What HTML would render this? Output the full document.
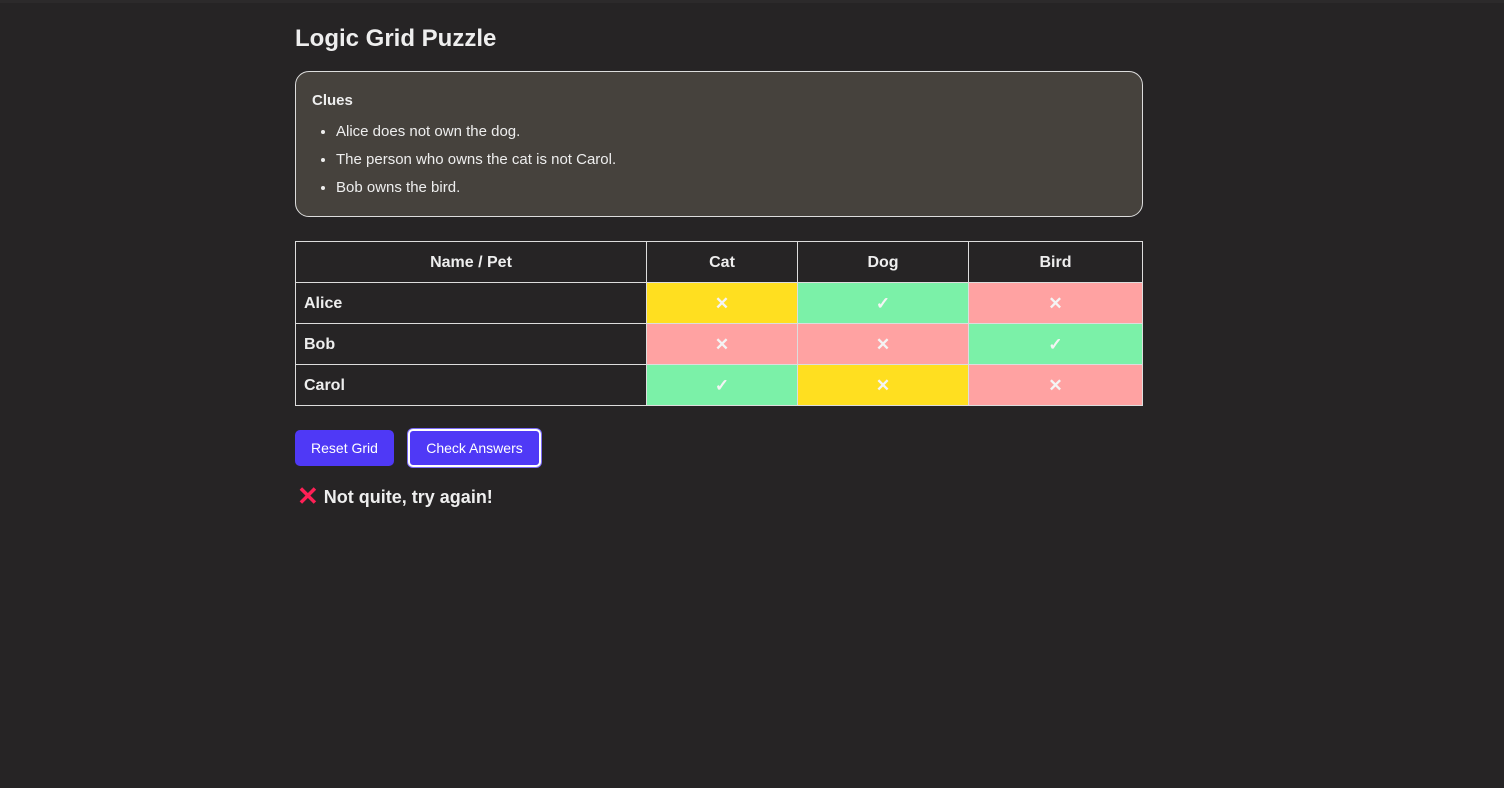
<!DOCTYPE html>
<html><head><style>
body{margin:0;background:#262425;font-family:"Liberation Sans",sans-serif;color:#eee;width:1504px;height:788px;overflow:hidden}
.top{height:3px;background:#2c2a2b}
.wrap{position:absolute;left:295px;top:0;width:848px}
h1{position:absolute;top:25px;left:0;margin:0;font-size:24px;font-weight:bold;color:#eee}
.clues{position:absolute;top:71px;left:0;width:846px;height:144px;border:1px solid #ddd;border-radius:14px;background:#46423d}
.clues b{position:absolute;left:16px;top:20px;font-size:15px}
.clues ul{position:absolute;top:46px;left:0;margin:0;padding-left:40px;font-size:15px;line-height:28px}
table{position:absolute;top:241px;left:0;border-collapse:collapse;width:848px;font-size:16px;font-weight:bold;table-layout:fixed}
td,th{border:1px solid #ddd;height:39px;padding:1px 0 0;text-align:center;box-sizing:border-box}
tr{height:41px}
td.n{text-align:left;padding-left:8px}
.y{background:#ffdf20}.g{background:#7bf1a8}.r{background:#ffa2a2}
.y,.g,.r{color:#f4f4f4;font-size:17px}
.btn{position:absolute;top:430px;height:36px;background:#4f39f6;color:#fff;font-size:14px;line-height:36px;text-align:center;border-radius:5px}
.msg{position:absolute;top:484px;left:2px;font-size:18px;font-weight:bold;line-height:24px;height:24px}
</style></head><body>
<div class="top"></div>
<div class="wrap">
<h1>Logic Grid Puzzle</h1>
<div class="clues"><b>Clues</b><ul><li>Alice does not own the dog.</li><li>The person who owns the cat is not Carol.</li><li>Bob owns the bird.</li></ul></div>
<table>
<colgroup><col style="width:351px"><col style="width:151px"><col style="width:171px"><col></colgroup>
<tr><th>Name / Pet</th><th>Cat</th><th>Dog</th><th>Bird</th></tr>
<tr><td class="n">Alice</td><td class="y">✕</td><td class="g">✓</td><td class="r">✕</td></tr>
<tr><td class="n">Bob</td><td class="r">✕</td><td class="r">✕</td><td class="g">✓</td></tr>
<tr><td class="n">Carol</td><td class="g">✓</td><td class="y">✕</td><td class="r">✕</td></tr>
</table>
<div class="btn" style="left:0;width:99px">Reset Grid</div>
<div class="btn" style="left:113px;width:129px;top:429px;height:34px;line-height:34px;border:2px solid #fff;box-shadow:0 0 0 1px #7c6cf6">Check Answers</div>
<div class="msg"><span style="color:#ff2056;font-size:26px;line-height:24px;vertical-align:-2px">✕</span> Not quite, try again!</div>
</div>
</body></html>
